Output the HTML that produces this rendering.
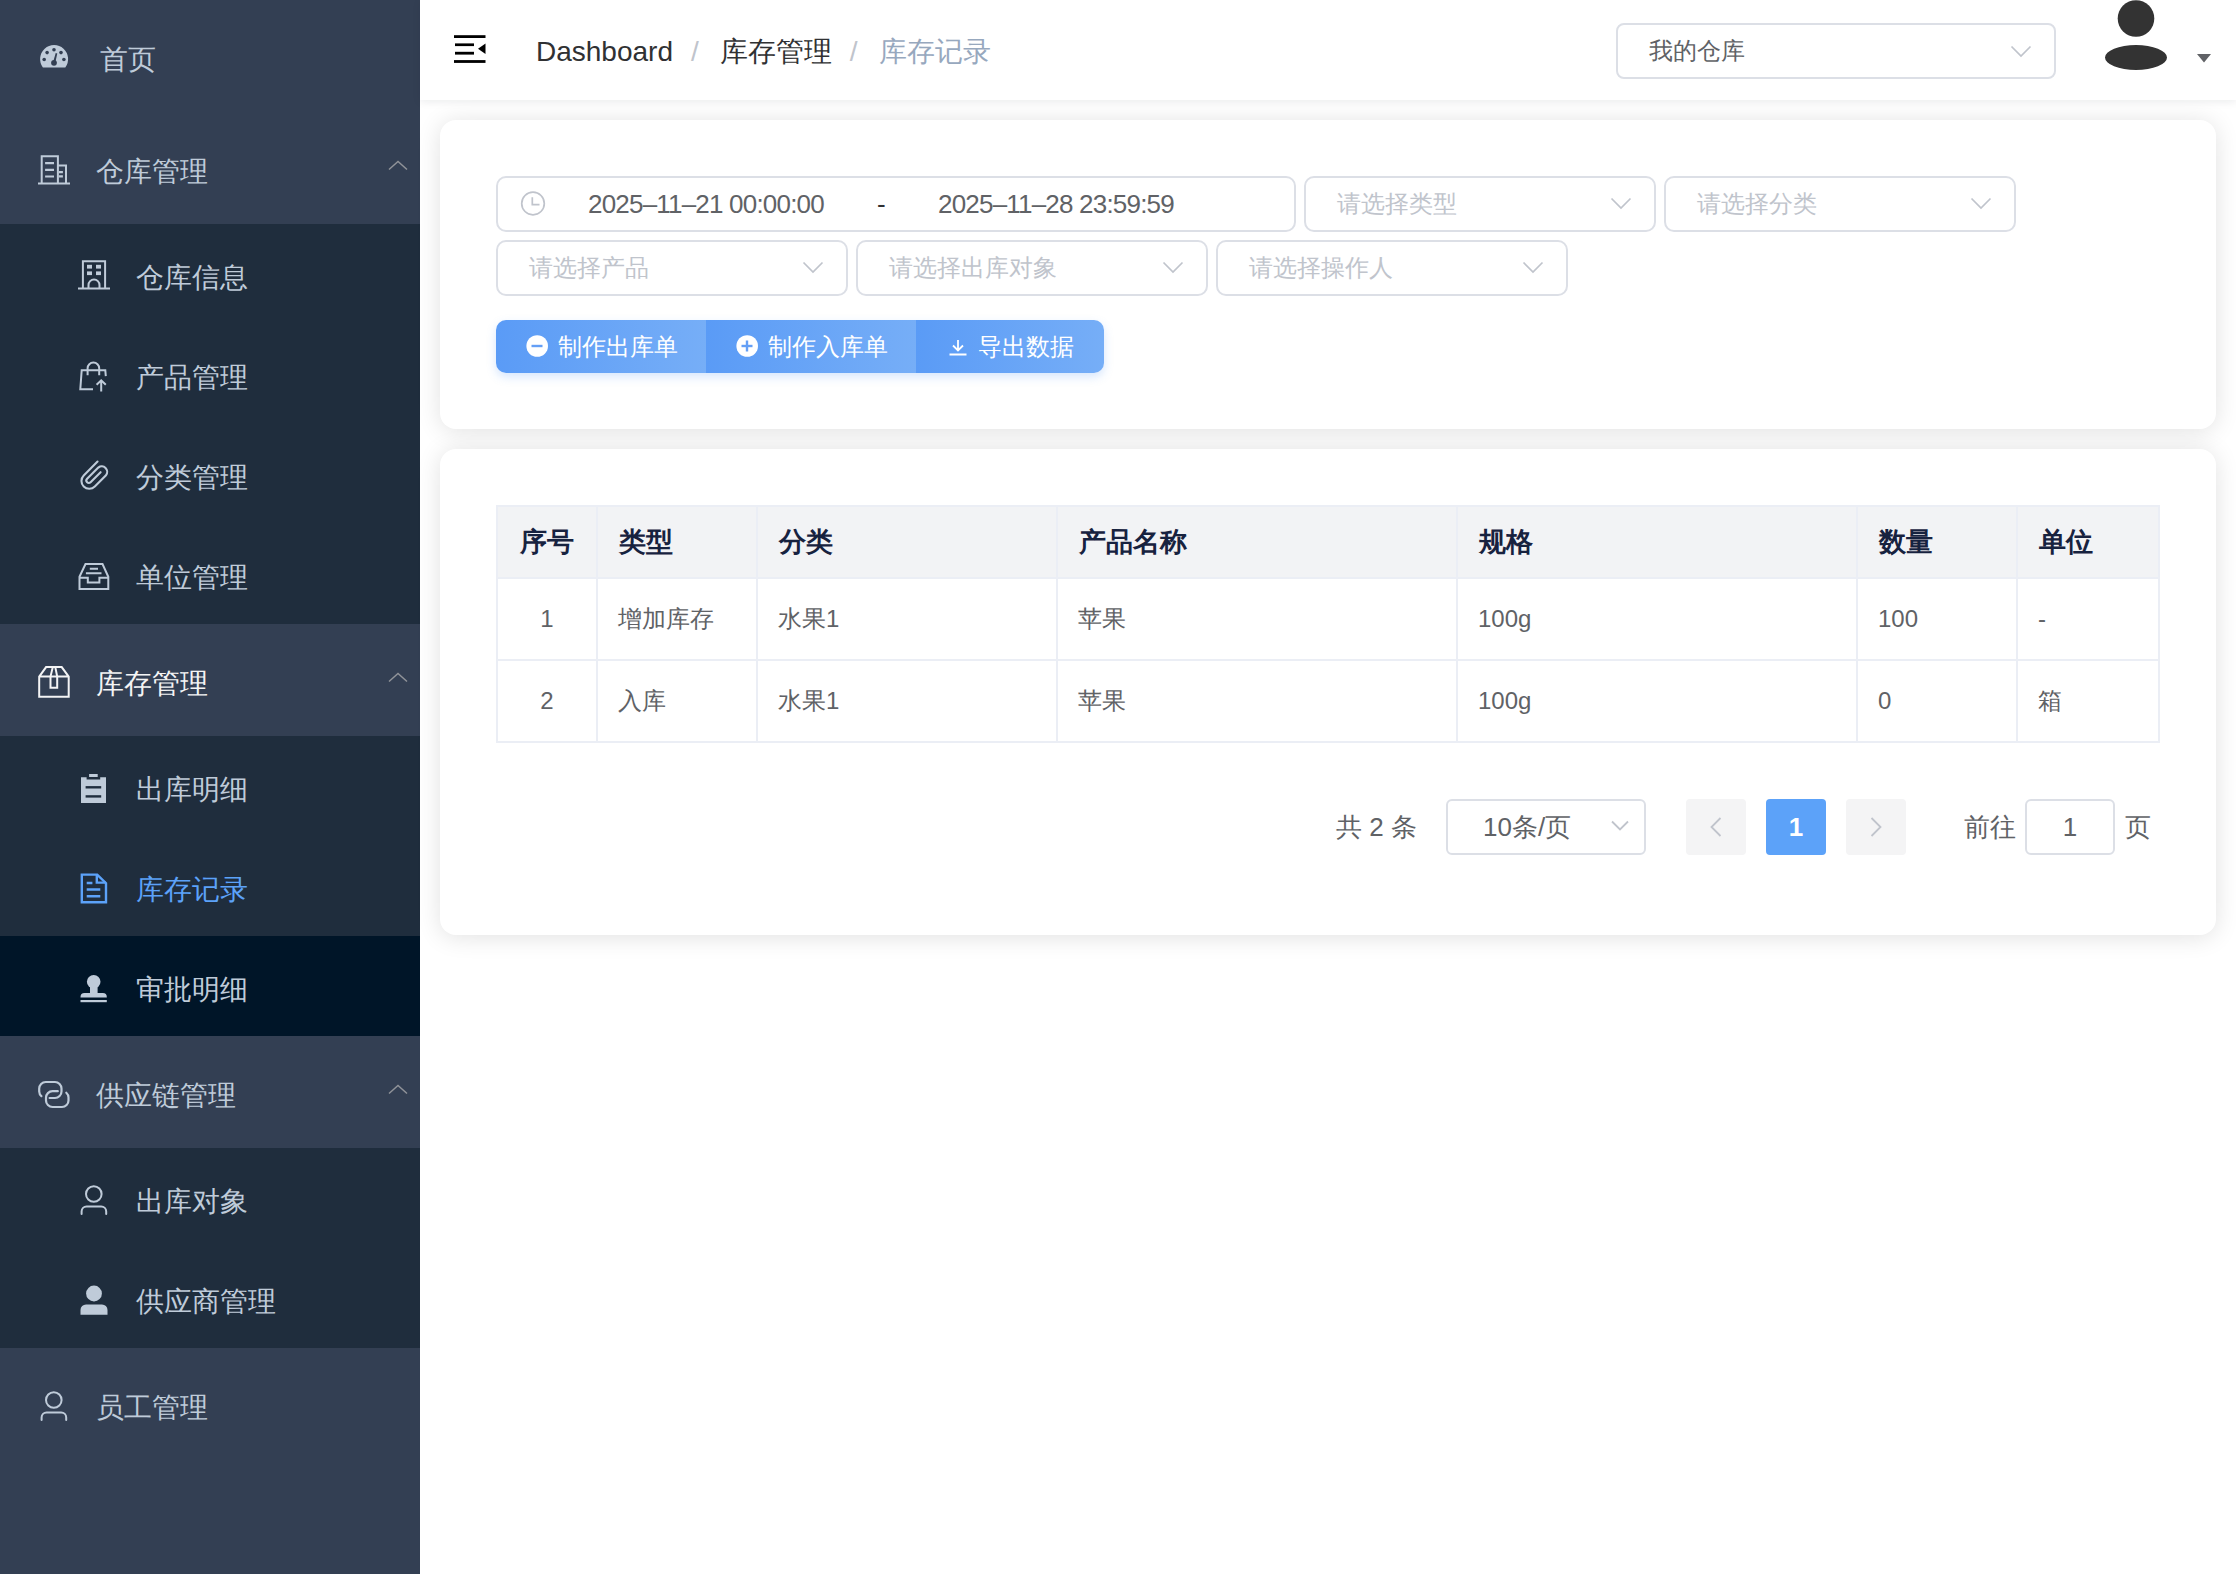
<!DOCTYPE html>
<html><head><meta charset="utf-8">
<style>
*{box-sizing:border-box;margin:0;padding:0}
html,body{width:2236px;height:1574px;overflow:hidden;background:#fff;font-family:"Liberation Sans",sans-serif}
.abs{position:absolute}
#side{position:absolute;left:0;top:0;width:420px;height:1574px;background:#333f53}
.mi{position:absolute;left:0;width:420px;color:#bfcbd9;font-size:28px}
.top{height:112px;background:#333f53}
.sub{height:100px;background:#1f2d3d}
.mi .t{position:absolute;white-space:nowrap}
.top .t{left:96px;top:4px;line-height:112px}
.sub .t{left:136px;top:4px;line-height:100px}
.mi svg{position:absolute}
.caret{position:absolute;left:388px;width:20px;height:10px}
#hdr{position:absolute;left:420px;top:0;width:1816px;height:100px;background:#fff;box-shadow:0 2px 8px rgba(0,21,41,.08);z-index:2}
.card{position:absolute;left:440px;width:1776px;background:#fff;border-radius:16px;box-shadow:0 2px 24px rgba(0,0,0,.12)}
.sel{position:absolute;height:56px;border:2px solid #dcdfe6;border-radius:10px;background:#fff}
.sel .ph{position:absolute;left:31px;top:0;line-height:52px;font-size:24px;color:#c0c4cc;white-space:nowrap}
.sel svg{position:absolute;top:0}
.dt{font-size:26px;color:#606266;line-height:56px;white-space:nowrap;letter-spacing:-0.8px}
.btng{border-radius:10px;height:53px !important;overflow:hidden;box-shadow:0 4px 10px rgba(90,156,248,.25)}
.btn{position:absolute;top:0;height:53px;background:linear-gradient(90deg,#5a9bf6,#76aef7)}
.btn span{position:absolute;top:0;line-height:53px;font-size:24px;color:#fff;font-weight:500;white-space:nowrap}
.hl{height:2px;background:#ebeef5}
.vl{width:2px;background:#ebeef5}
.th{font-size:27px;font-weight:bold;color:#17223f;line-height:73px;white-space:nowrap}
.td{font-size:24px;color:#606266;line-height:82px;white-space:nowrap}
.pg{font-size:26px;color:#606266;line-height:56px;white-space:nowrap}
table{border-collapse:collapse}
.sep{color:#c0c4cc;margin:0 21px 0 18px}
</style></head><body>
<div id="side">
<div class="mi top" style="top:0px"><span class="t" style="left:100px">首页</span></div>
<div class="mi top" style="top:112px"><span class="t">仓库管理</span></div>
<div class="mi sub" style="top:224px"><span class="t">仓库信息</span></div>
<div class="mi sub" style="top:324px"><span class="t">产品管理</span></div>
<div class="mi sub" style="top:424px"><span class="t">分类管理</span></div>
<div class="mi sub" style="top:524px"><span class="t">单位管理</span></div>
<div class="mi top" style="top:624px"><span class="t" style="color:#f4f4f5">库存管理</span></div>
<div class="mi sub" style="top:736px"><span class="t">出库明细</span></div>
<div class="mi sub" style="top:836px"><span class="t" style="color:#5ca2f9">库存记录</span></div>
<div class="mi sub" style="top:936px;background:#001528"><span class="t">审批明细</span></div>
<div class="mi top" style="top:1036px"><span class="t">供应链管理</span></div>
<div class="mi sub" style="top:1148px"><span class="t">出库对象</span></div>
<div class="mi sub" style="top:1248px"><span class="t">供应商管理</span></div>
<div class="mi top" style="top:1348px"><span class="t">员工管理</span></div>
<svg class="abs" style="left:0;top:0" width="420" height="1574" viewBox="0 0 420 1574">
<g fill="none" stroke="#bfcbd9" stroke-width="2">
<!-- dashboard -->
<g transform="translate(40,45.5)" stroke="none">
<path d="M2.9,22 A14,14 0 1 1 25.3,22 Z" fill="#bfcbd9"/>
<g fill="#333f53"><circle cx="4.2" cy="14" r="1.8"/><circle cx="7.1" cy="7.1" r="1.8"/><circle cx="14" cy="4.2" r="1.8"/><circle cx="21" cy="7.1" r="1.8"/><circle cx="23.9" cy="14" r="1.8"/><circle cx="14" cy="17.3" r="2.9"/><path d="M13,17 L15.7,7.6 L17.3,8 L15.2,17.5 Z"/></g>
</g>
<!-- office building -->
<g transform="translate(38,155)">
<path d="M3.7,28 V1.3 H19.9 V28 M19.9,10.5 H28 V28 M0,28.6 H32"/>
<path d="M7.1,8.1 H16 M7.1,14.8 H16 M7.1,21.5 H16 M20.8,17.2 H24.9 M20.8,21.4 H24.9" stroke-width="2.2"/>
</g>
<!-- building -->
<g transform="translate(78,260)">
<path d="M4.9,28 V1.3 H27.1 V28 M0,28.4 H32"/>
<path d="M10.5,28 V25 A5.5,5.5 0 0 1 21.5,25 V28"/>
<g fill="#bfcbd9" stroke="none"><rect x="9" y="4.8" width="5" height="3.8"/><rect x="18" y="4.8" width="5" height="3.8"/><rect x="9" y="11.4" width="5" height="3.7"/><rect x="18" y="11.4" width="5" height="3.7"/></g>
</g>
<!-- bag -->
<g transform="translate(79,361)">
<path d="M14,28.3 H1.3 L2.7,9.2 H26.3 L26.8,15.2"/>
<path d="M8.6,14.3 V7.3 A5.8,5.8 0 0 1 20.2,7.3 V14.3"/>
<path d="M22.2,30.5 V19.5 M17.6,23.8 L22.2,19.3 L26.8,23.8"/>
</g>
<!-- paperclip -->
<g transform="translate(79.3,460.3) scale(1.055)">
<path d="M17.3,1.2 L4.2,14.3 A7.4,7.4 0 0 0 14.7,24.8 L25.3,14.2 A5.2,5.2 0 0 0 18,6.9 L7.4,17.5 A2.3,2.3 0 0 0 10.7,20.8 L20.2,11.3" stroke-linecap="round"/>
</g>
<!-- inbox -->
<g transform="translate(78,563)">
<path d="M1.5,13.8 L7.5,1.1 H24.5 L30.3,13.8 V26 H1.5 Z"/>
<path d="M1.5,14.8 H9.8 V19.4 H21.4 V14.8 H30.3"/>
<path d="M11.8,5.8 H20 M7.9,10.2 H23.5"/>
</g>
<!-- box (active submenu) -->
<g transform="translate(38,666)" stroke="#f4f4f5">
<path d="M1.2,10.6 L8.1,1.1 H23.7 L30.7,10.6 V30.8 H1.2 Z M1.2,10.6 H30.7"/>
<path d="M14.8,1.1 L12.5,10.6 V21.8 H19.2 V10.6 L17.3,1.1"/>
</g>
<!-- clipboard -->
<g transform="translate(81,774)" stroke="none">
<path fill="#bfcbd9" d="M0,3.2 H5.6 V5.4 H19.2 V3.2 H25 V29 H0 Z"/>
<rect fill="#bfcbd9" x="8.1" y="0" width="8.6" height="3"/>
<rect fill="#1f2d3d" x="4.6" y="12.1" width="15.6" height="2.4"/>
<rect fill="#1f2d3d" x="4.6" y="21.2" width="15.6" height="2.4"/>
</g>
<!-- doc (active) -->
<g transform="translate(80,873)" stroke="#5ca2f9" stroke-width="2.4">
<path d="M1.8,1.6 H17.2 L26,10.2 V29.3 H1.8 Z"/>
<path d="M16.8,1.6 V9.6 H26"/>
<path d="M6.7,10 H12.4 M6.7,16.5 H20.3 M6.7,23.2 H20.3"/>
</g>
<!-- stamp -->
<g transform="translate(80,975)" stroke="none" fill="#bfcbd9">
<circle cx="13.7" cy="6.8" r="6.8"/>
<rect x="10" y="8" width="7.6" height="11"/>
<path d="M0.5,22.6 V22.1 A4,4 0 0 1 4.5,18.1 H22.8 A4,4 0 0 1 26.8,22.1 V22.6 Z"/>
<rect x="0.5" y="25" width="26.3" height="2.2"/>
</g>
<!-- link -->
<g transform="translate(38,1081)" stroke-width="2.2" stroke-linecap="round">
<path d="M3.4,15.2 A6.5,6.5 0 0 1 1.2,10.5 V7.5 A6.5,6.5 0 0 1 7.7,1 H17 A6.5,6.5 0 0 1 23.5,7.5 V10.5 A6.5,6.5 0 0 1 17,17 H11.6"/>
<path d="M19.8,10.2 H14.5 A6.5,6.5 0 0 0 8,16.7 V19.5 A6.5,6.5 0 0 0 14.5,26 H24 A6.5,6.5 0 0 0 30.5,19.5 V16.5 A6.5,6.5 0 0 0 28.3,11.7"/>
</g>
<!-- user outline -->
<g transform="translate(80,1185)" stroke-linecap="round">
<circle cx="13.8" cy="9" r="7.8"/>
<path d="M1.6,29 V26.4 A5,5 0 0 1 6.6,21.4 H21.2 A5,5 0 0 1 26.2,26.4 V29"/>
</g>
<!-- user filled -->
<g transform="translate(80,1285)" stroke="none" fill="#bfcbd9">
<circle cx="14" cy="8.5" r="7.9"/>
<path d="M0.5,29.8 V25 A5.5,5.5 0 0 1 6,19.5 H22 A5.5,5.5 0 0 1 27.5,25 V29.8 Z"/>
</g>
<!-- user outline top -->
<g transform="translate(40,1391)" stroke-linecap="round">
<circle cx="13.8" cy="9" r="7.8"/>
<path d="M1.6,29 V26.4 A5,5 0 0 1 6.6,21.4 H21.2 A5,5 0 0 1 26.2,26.4 V29"/>
</g>
<!-- carets -->
<g stroke="#909399" stroke-width="1.5">
<path d="M389,169.5 L398,161.5 L407,169.5"/>
<path d="M389,681.5 L398,673.5 L407,681.5"/>
<path d="M389,1093.5 L398,1085.5 L407,1093.5"/>
</g>
</g>
</svg>
</div>
<div id="hdr">
<svg class="abs" style="left:0;top:0" width="1816" height="100" viewBox="420 0 1816 100">
<g fill="#000"><rect x="454" y="35.2" width="31.5" height="2.8"/><rect x="455" y="43.4" width="19" height="2.7"/><rect x="455" y="51.8" width="19" height="2.8"/><rect x="454" y="60.1" width="31.5" height="2.8"/><path d="M478,48.8 L485.5,43.6 V54 Z"/></g>
<path d="M2105,57.5 A31,12.5 0 1 0 2167,57.5 A31,12.5 0 1 0 2105,57.5 Z" fill="#333"/>
<circle cx="2136" cy="18.5" r="18.3" fill="#333"/>
<path d="M2197,54 H2211 L2204,62.5 Z" fill="#606266"/>
</svg>
<div class="abs bc" style="left:116px;top:2px;line-height:100px;font-size:28px;white-space:nowrap;color:#303133">Dashboard<span class="sep">/</span>库存管理<span class="sep">/</span><span style="color:#97a8be">库存记录</span></div>
<div class="sel" style="left:1196px;top:23px;width:440px;height:56px;border-radius:8px"><span class="ph" style="color:#606266;font-size:24px">我的仓库</span>
<svg style="left:391px;top:19px" width="24" height="16" viewBox="0 0 24 16"><path d="M2.5,2.5 L12,12 L21.5,2.5" fill="none" stroke="#c0c4cc" stroke-width="1.7"/></svg></div>
</div>
<div class="card" style="top:120px;height:309px"></div>
<div class="sel" style="left:496px;top:176px;width:800px"></div>
<svg class="abs" style="left:518px;top:189px" width="30" height="30" viewBox="0 0 30 30"><circle cx="15" cy="14.5" r="11.3" fill="none" stroke="#c0c4cc" stroke-width="1.7"/><path d="M14.3,8.3 V15.6 H21.5" fill="none" stroke="#c0c4cc" stroke-width="1.7"/></svg>
<div class="abs dt" style="left:588px;top:176px">2025–11–21 00:00:00</div>
<div class="abs dt" style="left:877px;top:176px;color:#303133">-</div>
<div class="abs dt" style="left:938px;top:176px">2025–11–28 23:59:59</div>
<div class="sel" style="left:1304px;top:176px;width:352px"><span class="ph">请选择类型</span></div><svg class="abs" style="left:1609px;top:196px" width="24" height="16" viewBox="0 0 24 16"><path d="M2.5,2.5 L12,12 L21.5,2.5" fill="none" stroke="#c0c4cc" stroke-width="1.7"/></svg><div class="sel" style="left:1664px;top:176px;width:352px"><span class="ph">请选择分类</span></div><svg class="abs" style="left:1969px;top:196px" width="24" height="16" viewBox="0 0 24 16"><path d="M2.5,2.5 L12,12 L21.5,2.5" fill="none" stroke="#c0c4cc" stroke-width="1.7"/></svg><div class="sel" style="left:496px;top:240px;width:352px"><span class="ph">请选择产品</span></div><svg class="abs" style="left:801px;top:260px" width="24" height="16" viewBox="0 0 24 16"><path d="M2.5,2.5 L12,12 L21.5,2.5" fill="none" stroke="#c0c4cc" stroke-width="1.7"/></svg><div class="sel" style="left:856px;top:240px;width:352px"><span class="ph">请选择出库对象</span></div><svg class="abs" style="left:1161px;top:260px" width="24" height="16" viewBox="0 0 24 16"><path d="M2.5,2.5 L12,12 L21.5,2.5" fill="none" stroke="#c0c4cc" stroke-width="1.7"/></svg><div class="sel" style="left:1216px;top:240px;width:352px"><span class="ph">请选择操作人</span></div><svg class="abs" style="left:1521px;top:260px" width="24" height="16" viewBox="0 0 24 16"><path d="M2.5,2.5 L12,12 L21.5,2.5" fill="none" stroke="#c0c4cc" stroke-width="1.7"/></svg>
<div class="abs btng" style="left:496px;top:320px;width:608px;height:52px">
<div class="btn" style="left:0;width:210px"><svg class="abs" style="left:30px;top:15px" width="22" height="22" viewBox="0 0 22 22"><circle cx="11.2" cy="11" r="10.8" fill="#fff"/><rect x="5.5" y="9.8" width="11" height="2.4" fill="#649ff6"/></svg><span style="left:62px">制作出库单</span></div>
<div class="btn" style="left:210px;width:210px"><svg class="abs" style="left:30px;top:15px" width="22" height="22" viewBox="0 0 22 22"><circle cx="11.2" cy="11" r="10.8" fill="#fff"/><rect x="5.5" y="9.8" width="11" height="2.4" fill="#649ff6"/><rect x="9.8" y="5.5" width="2.4" height="11" fill="#649ff6"/></svg><span style="left:62px">制作入库单</span></div>
<div class="btn" style="left:420px;width:188px"><svg class="abs" style="left:32px;top:14px" width="22" height="22" viewBox="0 0 22 22"><path d="M10,6 V16.5 M5,11.5 L10,16.5 L15,11.5 M1.5,20.5 H18.5" fill="none" stroke="#fff" stroke-width="1.8"/></svg><span style="left:62px">导出数据</span></div>
</div>
<div class="card" style="top:449px;height:486px"></div>
<div class="abs" style="left:496px;top:505px;width:1664px;height:74px;background:#f2f3f5"></div>
<div class="abs hl" style="left:496px;top:505px;width:1664px"></div>
<div class="abs hl" style="left:496px;top:577px;width:1664px"></div>
<div class="abs hl" style="left:496px;top:659px;width:1664px"></div>
<div class="abs hl" style="left:496px;top:741px;width:1664px"></div>
<div class="abs vl" style="left:496px;top:505px;height:238px"></div>
<div class="abs vl" style="left:596px;top:505px;height:238px"></div>
<div class="abs vl" style="left:756px;top:505px;height:238px"></div>
<div class="abs vl" style="left:1056px;top:505px;height:238px"></div>
<div class="abs vl" style="left:1456px;top:505px;height:238px"></div>
<div class="abs vl" style="left:1856px;top:505px;height:238px"></div>
<div class="abs vl" style="left:2016px;top:505px;height:238px"></div>
<div class="abs vl" style="left:2158px;top:505px;height:238px"></div>
<div class="abs th" style="left:496px;top:506px;width:102px;text-align:center">序号</div>
<div class="abs th" style="left:619px;top:506px">类型</div>
<div class="abs th" style="left:779px;top:506px">分类</div>
<div class="abs th" style="left:1079px;top:506px">产品名称</div>
<div class="abs th" style="left:1479px;top:506px">规格</div>
<div class="abs th" style="left:1879px;top:506px">数量</div>
<div class="abs th" style="left:2039px;top:506px">单位</div>
<div class="abs td" style="left:496px;top:578px;width:102px;text-align:center">1</div>
<div class="abs td" style="left:618px;top:578px">增加库存</div>
<div class="abs td" style="left:778px;top:578px">水果1</div>
<div class="abs td" style="left:1078px;top:578px">苹果</div>
<div class="abs td" style="left:1478px;top:578px">100g</div>
<div class="abs td" style="left:1878px;top:578px">100</div>
<div class="abs td" style="left:2038px;top:578px">-</div>
<div class="abs td" style="left:496px;top:660px;width:102px;text-align:center">2</div>
<div class="abs td" style="left:618px;top:660px">入库</div>
<div class="abs td" style="left:778px;top:660px">水果1</div>
<div class="abs td" style="left:1078px;top:660px">苹果</div>
<div class="abs td" style="left:1478px;top:660px">100g</div>
<div class="abs td" style="left:1878px;top:660px">0</div>
<div class="abs td" style="left:2038px;top:660px">箱</div>
<div class="abs pg" style="left:1336px;top:799px">共 2 条</div>
<div class="sel" style="left:1446px;top:799px;width:200px;height:56px;border-radius:6px"><span class="ph" style="left:35px;color:#606266;font-size:26px">10条/页</span></div>
<svg class="abs" style="left:1608px;top:818px" width="24" height="16" viewBox="0 0 24 16"><path d="M4,3.5 L12,11.5 L20,3.5" fill="none" stroke="#c0c4cc" stroke-width="1.8"/></svg>
<div class="abs" style="left:1686px;top:799px;width:60px;height:56px;background:#f4f4f5;border-radius:4px"></div>
<svg class="abs" style="left:1686px;top:799px" width="60" height="56" viewBox="0 0 60 56"><path d="M34.5,19 L25.5,28 L34.5,37" fill="none" stroke="#c0c4cc" stroke-width="1.8"/></svg>
<div class="abs" style="left:1766px;top:799px;width:60px;height:56px;background:#5ca2f9;border-radius:4px;color:#fff;font-weight:bold;font-size:26px;line-height:56px;text-align:center">1</div>
<div class="abs" style="left:1846px;top:799px;width:60px;height:56px;background:#f4f4f5;border-radius:4px"></div>
<svg class="abs" style="left:1846px;top:799px" width="60" height="56" viewBox="0 0 60 56"><path d="M25.5,19 L34.5,28 L25.5,37" fill="none" stroke="#c0c4cc" stroke-width="1.8"/></svg>
<div class="abs pg" style="left:1964px;top:799px">前往</div>
<div class="sel" style="left:2025px;top:799px;width:90px;height:56px;border-radius:6px"><span class="ph" style="left:0;width:86px;text-align:center;color:#606266;font-size:26px">1</span></div>
<div class="abs pg" style="left:2125px;top:799px">页</div>
</body></html>
